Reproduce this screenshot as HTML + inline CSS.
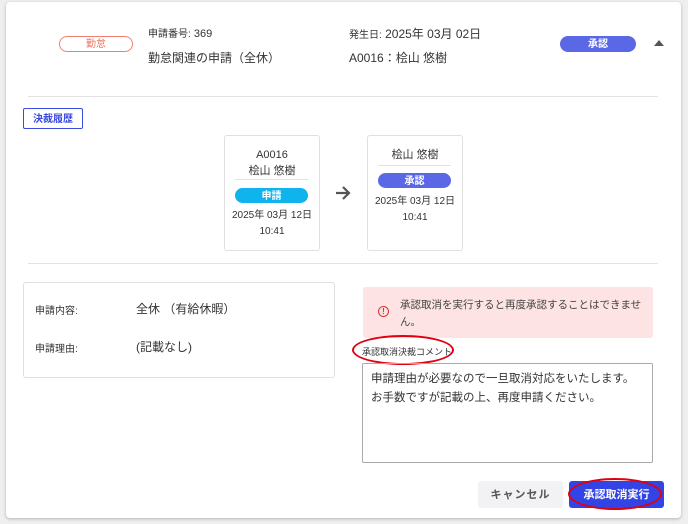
<!DOCTYPE html>
<html><head><meta charset="utf-8"><style>
*{box-sizing:border-box;margin:0;padding:0}
body{width:688px;height:524px;background:#efefef;font-family:"Liberation Sans","Noto Sans CJK JP",sans-serif;color:#333;position:relative;overflow:hidden}
.a{position:absolute}
.card{left:6px;top:2px;width:675px;height:516px;background:#fff;border-radius:4px;box-shadow:0 1px 3px rgba(0,0,0,.25)}
.pill{border-radius:9px;font-size:10px;font-weight:bold;display:flex;align-items:center;justify-content:center;line-height:1;padding-top:2px}
.hr{height:1px;background:#e2e2e2}
.box{border:1px solid #e0e0e0;border-radius:3px;background:#fff}
.t{white-space:nowrap}
</style></head><body>
<div class="a card"></div>
<div class="a pill" style="left:59px;top:36px;width:74px;height:16px;border:1px solid #f08070;color:#f07060;font-weight:normal">勤怠</div>
<div class="a t" style="left:148px;top:25px;font-size:11px"><span style="font-size:10px">申請番号:</span> 369</div>
<div class="a t" style="left:148px;top:49px;font-size:12px">勤怠関連の申請（全休）</div>
<div class="a t" style="left:349px;top:25px;font-size:12px"><span style="font-size:10px">発生日:</span> 2025年 03月 02日</div>
<div class="a t" style="left:349px;top:49px;font-size:12px">A0016：桧山 悠樹</div>
<div class="a pill" style="left:560px;top:36px;width:76px;height:16px;background:#5b68e6;color:#fff">承認</div>
<div class="a" style="left:654px;top:40px;width:0;height:0;border-left:5px solid transparent;border-right:5px solid transparent;border-bottom:6px solid #555"></div>
<div class="a hr" style="left:28px;top:96px;width:630px"></div>
<div class="a pill" style="left:23px;top:108px;width:60px;height:21px;border:1px solid #3a4be0;border-radius:2px;color:#3a4be0">決裁履歴</div>

<div class="a box" style="left:224px;top:135px;width:96px;height:116px"></div>
<div class="a t" style="left:224px;top:147px;width:96px;text-align:center;font-size:11px;line-height:16px">A0016<br>桧山 悠樹</div>
<div class="a hr" style="left:235px;top:179px;width:73px"></div>
<div class="a pill" style="left:235px;top:188px;width:73px;height:15px;background:#10b4ec;color:#fff">申請</div>
<div class="a t" style="left:224px;top:208px;width:96px;text-align:center;font-size:10px;line-height:16px">2025年 03月 12日<br>10:41</div>

<svg class="a" style="left:334px;top:184px" width="18" height="18" viewBox="0 0 18 18"><path d="M2 9H15M9 3L15 9L9 15" fill="none" stroke="#555" stroke-width="2.2"/></svg>

<div class="a box" style="left:367px;top:135px;width:96px;height:116px"></div>
<div class="a t" style="left:367px;top:147px;width:96px;text-align:center;font-size:11px;line-height:16px">桧山 悠樹</div>
<div class="a hr" style="left:378px;top:165px;width:73px"></div>
<div class="a pill" style="left:378px;top:173px;width:73px;height:15px;background:#5b68e6;color:#fff">承認</div>
<div class="a t" style="left:367px;top:194px;width:96px;text-align:center;font-size:10px;line-height:16px">2025年 03月 12日<br>10:41</div>

<div class="a hr" style="left:28px;top:263px;width:630px"></div>
<div class="a box" style="left:23px;top:282px;width:312px;height:96px"></div>
<div class="a t" style="left:35px;top:302px;font-size:10px">申請内容:</div>
<div class="a t" style="left:136px;top:300px;font-size:12px">全休 （有給休暇）</div>
<div class="a t" style="left:35px;top:340px;font-size:10px">申請理由:</div>
<div class="a t" style="left:136px;top:338px;font-size:12px">(記載なし)</div>

<div class="a" style="left:363px;top:287px;width:290px;height:51px;background:#fde3e3;border-radius:3px"></div>
<div class="a pill" style="left:378px;top:306px;width:11px;height:11px;border:1.5px solid #e03030;border-radius:50%;color:#e03030;font-size:8px;padding-top:0">!</div>
<div class="a" style="left:400px;top:297px;width:250px;font-size:10.5px;line-height:17px;color:#444">承認取消を実行すると再度承認することはできません。</div>
<div class="a t" style="left:362px;top:345px;font-size:9px;color:#333">承認取消決裁コメント</div>
<div class="a" style="left:352px;top:335px;width:102px;height:30px;border:2.5px solid #e00010;border-radius:50%"></div>
<div class="a" style="left:362px;top:363px;width:291px;height:100px;border:1px solid #aaa;border-radius:2px;padding:6px 8px;font-size:11.5px;line-height:19px;color:#333">申請理由が必要なので一旦取消対応をいたします。<br>お手数ですが記載の上、再度申請ください。</div>

<div class="a pill" style="left:478px;top:481px;width:85px;height:27px;background:#f2f2f4;border-radius:3px;font-size:11px;color:#555;letter-spacing:1px">キャンセル</div>
<div class="a pill" style="left:569px;top:481px;width:95px;height:27px;background:#3344e6;border-radius:3px;font-size:11px;color:#fff">承認取消実行</div>
<div class="a" style="left:568px;top:478px;width:94px;height:32px;border:2.5px solid #e00010;border-radius:50%"></div>
</body></html>
